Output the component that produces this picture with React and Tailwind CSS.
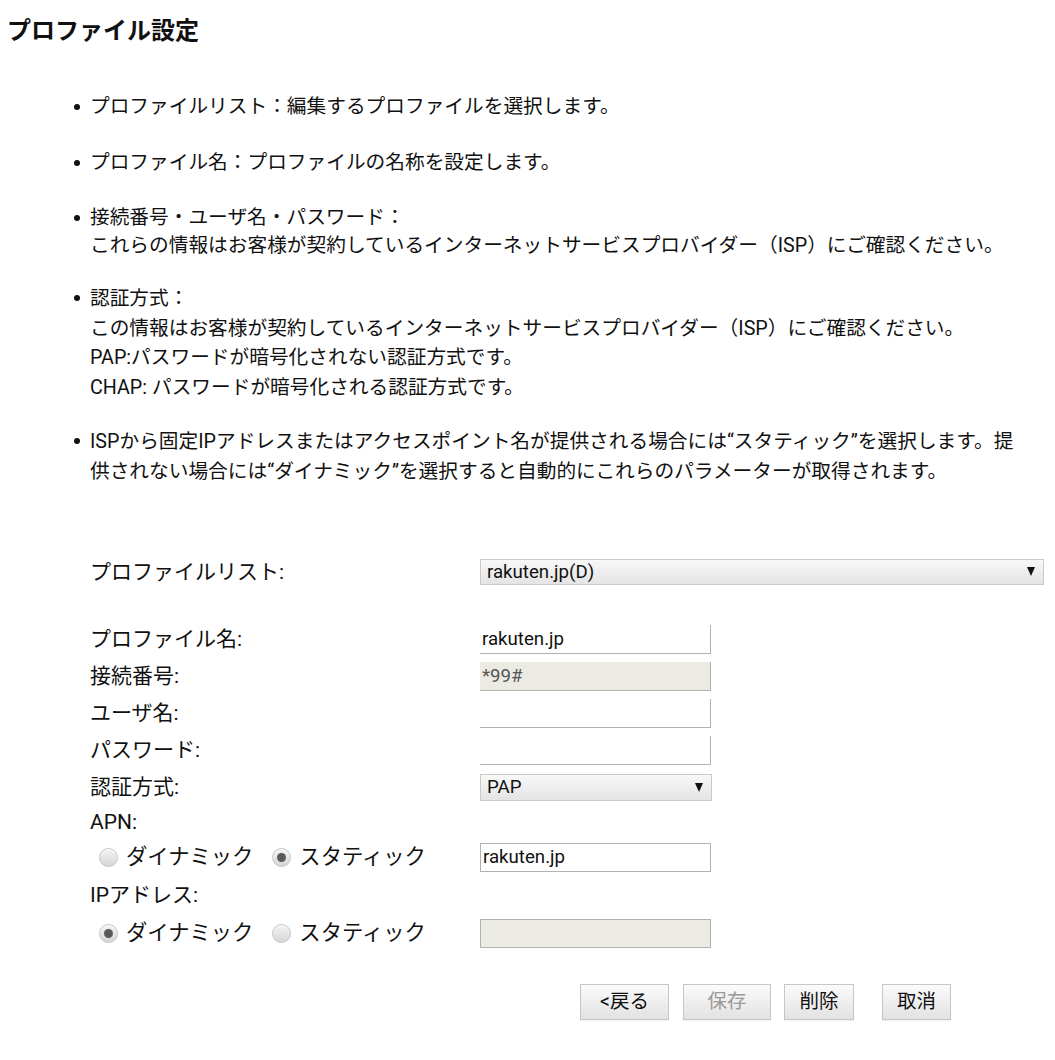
import { useState } from 'react';

const Radio = ({ checked, label, onClick }) => (
  <label className="flex items-center cursor-pointer" onClick={onClick}>
    <span className="w-[19px] h-[19px] rounded-full border border-[#c4c4c4] bg-gradient-to-b from-[#f4f4f4] to-[#d6d6d6] flex items-center justify-center shadow-[inset_0_1px_1px_rgba(255,255,255,0.8)]">
      {checked && <span className="w-[9px] h-[9px] rounded-full bg-[#5a5a5a]"></span>}
    </span>
    <span className="ml-[8px] text-[21.3px] leading-[26px]">{label}</span>
  </label>
);

const FormRow = ({ label, children, className = '' }) => (
  <div className={`flex items-center ${className}`}>
    <div className="w-[390px] text-[21px] leading-[26px]">{label}</div>
    {children}
  </div>
);

const TextInput = ({ value, disabled, full }) => (
  <input
    type="text"
    readOnly
    value={value}
    disabled={disabled}
    className={`w-[231px] h-[29px] px-[2px] text-[18.67px] outline-none ${
      full ? 'border border-[#b2b2b2]' : 'border-b border-r border-[#b2b2b2]'
    } ${disabled ? 'bg-[#ebebe4] text-[#555]' : 'bg-white text-[#111]'}`}
  />
);

const Arrow = () => (
  <svg width="8" height="9" viewBox="0 0 8 9" className="shrink-0">
    <path d="M0 0 H8 L4 9 Z" fill="#111" />
  </svg>
);

const FakeSelect = ({ value, width }) => (
  <div
    className={`${width} flex items-center justify-between pl-[6px] pr-[8px] border border-[#c9c9c9] bg-gradient-to-b from-[#f8f8f8] to-[#e4e4e4] text-[18.67px] text-[#111] cursor-pointer`}
  >
    <span>{value}</span>
    <Arrow />
  </div>
);

const Btn = ({ children, disabled, width }) => (
  <button
    disabled={disabled}
    className={`${width} h-[36px] text-[19.5px] border border-[#c6c6c6] bg-gradient-to-b from-[#fbfbfb] to-[#e2e2e2] shadow-[0_1px_1px_rgba(0,0,0,0.05)] ${
      disabled ? 'text-[#9a9a9a]' : 'text-[#111]'
    }`}
  >
    {children}
  </button>
);

const Bullet = () => (
  <span className="w-[17px] shrink-0 flex items-center h-[28px]">
    <span className="w-[6px] h-[6px] ml-[1px] rounded-full bg-[#111]"></span>
  </span>
);

const App = () => {
  const [apnMode, setApnMode] = useState('static');
  const [ipMode, setIpMode] = useState('dynamic');

  return (
    <div className="min-h-screen bg-white text-[#111] font-[Roboto,'Noto_Sans_CJK_JP',sans-serif]">
      <h1 className="pl-[7px] pt-[15px] text-[24px] leading-[32px] font-bold">プロファイル設定</h1>

      {/* Help text */}
      <ul className="pl-[73px] text-[19.7px] mt-[46px]">
        <li className="flex leading-[28px]">
          <Bullet />
          <div>プロファイルリスト：編集するプロファイルを選択します。</div>
        </li>
        <li className="flex leading-[28px] mt-[28px]">
          <Bullet />
          <div>プロファイル名：プロファイルの名称を設定します。</div>
        </li>
        <li className="flex leading-[28px] mt-[27px]">
          <Bullet />
          <div className="whitespace-nowrap">
            接続番号・ユーザ名・パスワード：<br />
            これらの情報はお客様が契約しているインターネットサービスプロバイダー（ISP）にご確認ください。
          </div>
        </li>
        <li className="flex leading-[29.7px] mt-[24px]">
          <Bullet />
          <div className="whitespace-nowrap">
            認証方式：<br />
            この情報はお客様が契約しているインターネットサービスプロバイダー（ISP）にご確認ください。<br />
            PAP:パスワードが暗号化されない認証方式です。<br />
            CHAP: パスワードが暗号化される認証方式です。
          </div>
        </li>
        <li className="flex leading-[30px] mt-[24px]">
          <Bullet />
          <div className="whitespace-nowrap">
            ISPから固定IPアドレスまたはアクセスポイント名が提供される場合には“スタティック”を選択します。提<br />
            供されない場合には“ダイナミック”を選択すると自動的にこれらのパラメーターが取得されます。
          </div>
        </li>
      </ul>

      {/* Form */}
      <div className="pl-[90px] mt-[72px]">
        <FormRow label="プロファイルリスト:">
          <FakeSelect value="rakuten.jp(D)" width="w-[564px] h-[26px]" />
        </FormRow>

        <FormRow label="プロファイル名:" className="mt-[40px]">
          <TextInput value="rakuten.jp" />
        </FormRow>
        <FormRow label="接続番号:" className="mt-[8px]">
          <TextInput value="*99#" disabled />
        </FormRow>
        <FormRow label="ユーザ名:" className="mt-[8px]">
          <TextInput value="" />
        </FormRow>
        <FormRow label="パスワード:" className="mt-[8px]">
          <TextInput value="" />
        </FormRow>
        <FormRow label="認証方式:" className="mt-[9px]">
          <FakeSelect value="PAP" width="w-[232px] h-[27px]" />
        </FormRow>

        <div className="mt-[8px] text-[21px] leading-[26px]">APN:</div>
        <div className="flex items-center mt-[8px]">
          <div className="w-[390px] flex items-center pl-[9px] gap-[19px]">
            <Radio checked={apnMode === 'dynamic'} label="ダイナミック" onClick={() => setApnMode('dynamic')} />
            <Radio checked={apnMode === 'static'} label="スタティック" onClick={() => setApnMode('static')} />
          </div>
          <TextInput value="rakuten.jp" full />
        </div>

        <div className="mt-[10px] text-[21px] leading-[26px]">IPアドレス:</div>
        <div className="flex items-center mt-[11px]">
          <div className="w-[390px] flex items-center pl-[9px] gap-[19px]">
            <Radio checked={ipMode === 'dynamic'} label="ダイナミック" onClick={() => setIpMode('dynamic')} />
            <Radio checked={ipMode === 'static'} label="スタティック" onClick={() => setIpMode('static')} />
          </div>
          <TextInput value="" disabled full />
        </div>

        {/* Buttons */}
        <div className="flex mt-[36px] pl-[490px]">
          <Btn width="w-[89px]">&lt;戻る</Btn>
          <div className="ml-[14px]">
            <Btn width="w-[88px]" disabled>保存</Btn>
          </div>
          <div className="ml-[13px]">
            <Btn width="w-[70px]">削除</Btn>
          </div>
          <div className="ml-[28px]">
            <Btn width="w-[69px]">取消</Btn>
          </div>
        </div>
      </div>
    </div>
  );
};

export default App;
